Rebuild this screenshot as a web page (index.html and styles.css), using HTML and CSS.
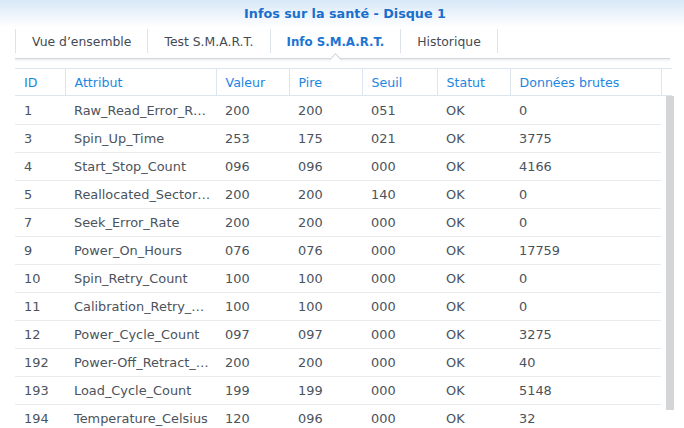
FILE: index.html
```html
<!DOCTYPE html>
<html lang="fr">
<head>
<meta charset="utf-8">
<title>Infos sur la santé - Disque 1</title>
<link rel="stylesheet" href="styles.css">
</head>
<body>
<div class="window">
  <div class="titlebar">Infos sur la santé - Disque 1</div>
  <div class="tabs">
    <div class="tab">Vue d’ensemble</div>
    <div class="tab">Test S.M.A.R.T.</div>
    <div class="tab active">Info S.M.A.R.T.</div>
    <div class="tab">Historique</div>
  </div>
  <div class="tabline"></div>
  <div class="grid">
    <table class="head">
      <colgroup>
        <col class="c-id"><col class="c-attr"><col class="c-val"><col class="c-pire"><col class="c-seuil"><col class="c-stat"><col class="c-raw"><col class="c-fill">
      </colgroup>
      <tr>
        <th>ID</th><th>Attribut</th><th>Valeur</th><th>Pire</th><th>Seuil</th><th>Statut</th><th>Données brutes</th><th class="fill"></th>
      </tr>
    </table>
    <div class="body">
      <table class="rows">
        <colgroup>
          <col class="c-id"><col class="c-attr"><col class="c-val"><col class="c-pire"><col class="c-seuil"><col class="c-stat"><col class="c-raw">
        </colgroup>
        <tr><td>1</td><td>Raw_Read_Error_Rate</td><td>200</td><td>200</td><td>051</td><td>OK</td><td>0</td></tr>
        <tr><td>3</td><td>Spin_Up_Time</td><td>253</td><td>175</td><td>021</td><td>OK</td><td>3775</td></tr>
        <tr><td>4</td><td>Start_Stop_Count</td><td>096</td><td>096</td><td>000</td><td>OK</td><td>4166</td></tr>
        <tr><td>5</td><td>Reallocated_Sector_Ct</td><td>200</td><td>200</td><td>140</td><td>OK</td><td>0</td></tr>
        <tr><td>7</td><td>Seek_Error_Rate</td><td>200</td><td>200</td><td>000</td><td>OK</td><td>0</td></tr>
        <tr><td>9</td><td>Power_On_Hours</td><td>076</td><td>076</td><td>000</td><td>OK</td><td>17759</td></tr>
        <tr><td>10</td><td>Spin_Retry_Count</td><td>100</td><td>100</td><td>000</td><td>OK</td><td>0</td></tr>
        <tr><td>11</td><td>Calibration_Retry_Count</td><td>100</td><td>100</td><td>000</td><td>OK</td><td>0</td></tr>
        <tr><td>12</td><td>Power_Cycle_Count</td><td>097</td><td>097</td><td>000</td><td>OK</td><td>3275</td></tr>
        <tr><td>192</td><td>Power-Off_Retract_Count</td><td>200</td><td>200</td><td>000</td><td>OK</td><td>40</td></tr>
        <tr><td>193</td><td>Load_Cycle_Count</td><td>199</td><td>199</td><td>000</td><td>OK</td><td>5148</td></tr>
        <tr><td>194</td><td>Temperature_Celsius</td><td>120</td><td>096</td><td>000</td><td>OK</td><td>32</td></tr>
      </table>
      <div class="scrollbar"></div>
    </div>
  </div>
</div>
</body>
</html>
```
FILE: styles.css
```css
* { box-sizing: border-box; }
html, body {
  margin: 0;
  padding: 0;
  background: #ffffff;
}
body {
  width: 684px;
  height: 428px;
  overflow: hidden;
  font-family: "DejaVu Sans", Verdana, sans-serif;
  font-size: 12px;
  color: #4b535c;
}
.window {
  width: 684px;
  height: 428px;
  overflow: hidden;
}
.titlebar {
  height: 28px;
  line-height: 27px;
  padding-left: 6px;
  text-align: center;
  font-weight: bold;
  font-size: 12.75px;
  color: #1a6fcd;
  background: linear-gradient(to bottom, #d7e8f8 0%, #eef5fc 55%, #ffffff 100%);
}
.tabs {
  display: flex;
  margin-left: 15px;
  height: 30px;
  padding-top: 1px;
  font-size: 12.4px;
}
.tab {
  height: 24px;
  line-height: 26px;
  padding: 0 16px;
  border-right: 1px solid #dde3ea;
  color: #434b54;
  white-space: nowrap;
}
.tab:first-child {
  border-left: 1px solid #dde3ea;
}
.tab.active {
  position: relative;
  font-weight: bold;
  font-size: 11.8px;
  color: #1c74d4;
}
.tab.active::after {
  content: "";
  position: absolute;
  left: 50%;
  top: 26px;
  width: 8px;
  height: 8px;
  margin-left: -4px;
  background: #ffffff;
  border-left: 1px solid #cfd3d7;
  border-top: 1px solid #cfd3d7;
  transform: rotate(45deg);
  z-index: 2;
}
.tabline {
  margin-left: 15px;
  width: 655px;
  height: 4px;
  border-top: 1px solid #d3d6d9;
  background: linear-gradient(to bottom, #eceef0, #ffffff);
}
.grid {
  margin-top: 6px;
  margin-left: 15px;
}
table {
  border-collapse: collapse;
  table-layout: fixed;
}
.c-id { width: 50px; }
.c-attr { width: 151px; }
.c-val { width: 73px; }
.c-pire { width: 73px; }
.c-seuil { width: 75px; }
.c-stat { width: 73px; }
.c-raw { width: 151px; }
.c-fill { width: 11px; }
.head {
  width: 657px;
  font-size: 12.6px;
}
.head th {
  height: 27px;
  padding: 0 0 0 9px;
  text-align: left;
  font-weight: normal;
  color: #1c86e3;
  border-top: 1px solid #dbe6f1;
  border-bottom: 1px solid #dbe6f1;
  border-left: 1px solid #dbe6f1;
  white-space: nowrap;
}
.head th:first-child {
  border-left: none;
}
.body {
  display: flex;
  align-items: flex-start;
}
.rows {
  width: 646px;
  font-size: 12.9px;
}
.rows td {
  height: 28px;
  padding: 1px 4px 0 9px;
  border-bottom: 1px solid #ebebeb;
  white-space: nowrap;
  overflow: hidden;
  text-overflow: ellipsis;
  color: #4b535c;
}
.scrollbar {
  margin-left: 5px;
  width: 8px;
  height: 314px;
  background: #d4d5d7;
}
```
